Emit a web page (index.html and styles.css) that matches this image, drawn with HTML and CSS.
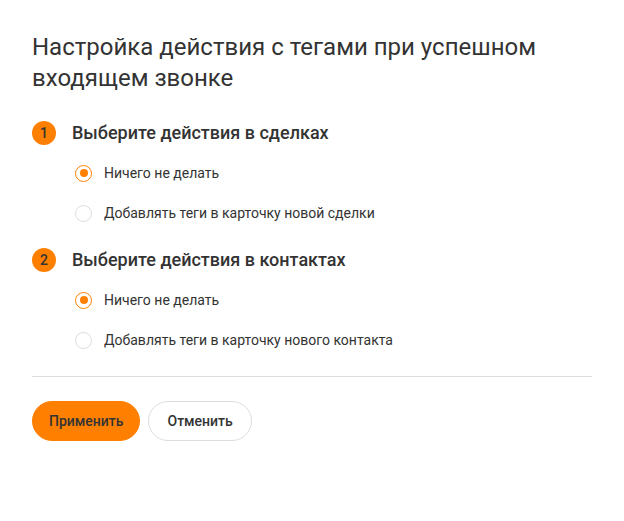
FILE: index.html
```html
<!DOCTYPE html>
<html lang="ru">
<head>
<meta charset="utf-8">
<link rel="stylesheet" href="styles.css">
</head>
<body>
<div class="dialog">
  <h1 class="title">Настройка действия с тегами при успешном входящем звонке</h1>
  <section class="step">
    <div class="step-head"><span class="badge">1</span><h2 class="step-title">Выберите действия в сделках</h2></div>
    <div class="options">
      <label class="option"><span class="radio checked"></span><span class="label">Ничего не делать</span></label>
      <label class="option"><span class="radio"></span><span class="label">Добавлять теги в карточку новой сделки</span></label>
    </div>
  </section>
  <section class="step">
    <div class="step-head"><span class="badge">2</span><h2 class="step-title">Выберите действия в контактах</h2></div>
    <div class="options">
      <label class="option"><span class="radio checked"></span><span class="label">Ничего не делать</span></label>
      <label class="option"><span class="radio"></span><span class="label">Добавлять теги в карточку нового контакта</span></label>
    </div>
  </section>
  <hr class="divider">
  <div class="actions">
    <button class="btn btn-primary">Применить</button>
    <button class="btn btn-secondary">Отменить</button>
  </div>
</div>
</body>
</html>
```
FILE: styles.css
```css
* { box-sizing: border-box; }
html, body { margin: 0; padding: 0; background: #fff; }
body { font-family: Roboto, "Noto Sans", sans-serif; color: #333; }
.dialog { width: 624px; padding: 32px 32px 0 32px; }
.title { margin: 0; font-size: 24px; font-weight: 400; line-height: 31px; color: #333; width: 540px; }
.step { margin-top: 27px; }
.step-head { display: flex; align-items: center; gap: 16px; height: 24px; }
.badge { width: 24px; height: 24px; border-radius: 50%; background: #ff8000; color: #333; font-size: 14px; font-weight: 500; display: flex; align-items: center; justify-content: center; flex: none; }
.step-title { margin: 0; font-size: 18px; font-weight: 500; line-height: 24px; color: #333; }
.options { display: flex; flex-direction: column; gap: 24px; padding-left: 43px; margin-top: 20px; }
.option { display: flex; align-items: center; gap: 12px; height: 16px; font-size: 14px; color: #333; cursor: pointer; }
.radio { width: 17px; height: 17px; border-radius: 50%; border: 1px solid #dcdcdc; background: #fff; display: flex; align-items: center; justify-content: center; flex: none; }
.radio.checked { border-color: #ff8000; }
.radio.checked::after { content: ""; width: 8px; height: 8px; border-radius: 50%; background: #ff8000; }
.divider { margin: 28px 0 0 0; border: 0; border-top: 1px solid #ddd; height: 0; }
.actions { display: flex; gap: 8px; margin-top: 24px; }
.btn { height: 40px; border-radius: 20px; font-family: inherit; font-size: 14px; font-weight: 500; color: #333; padding: 0 16px; cursor: pointer; }
.btn-primary { background: #ff8000; border: 1px solid #ff8000; }
.btn-secondary { background: #fff; border: 1px solid #ddd; padding: 0 18px; }
```
